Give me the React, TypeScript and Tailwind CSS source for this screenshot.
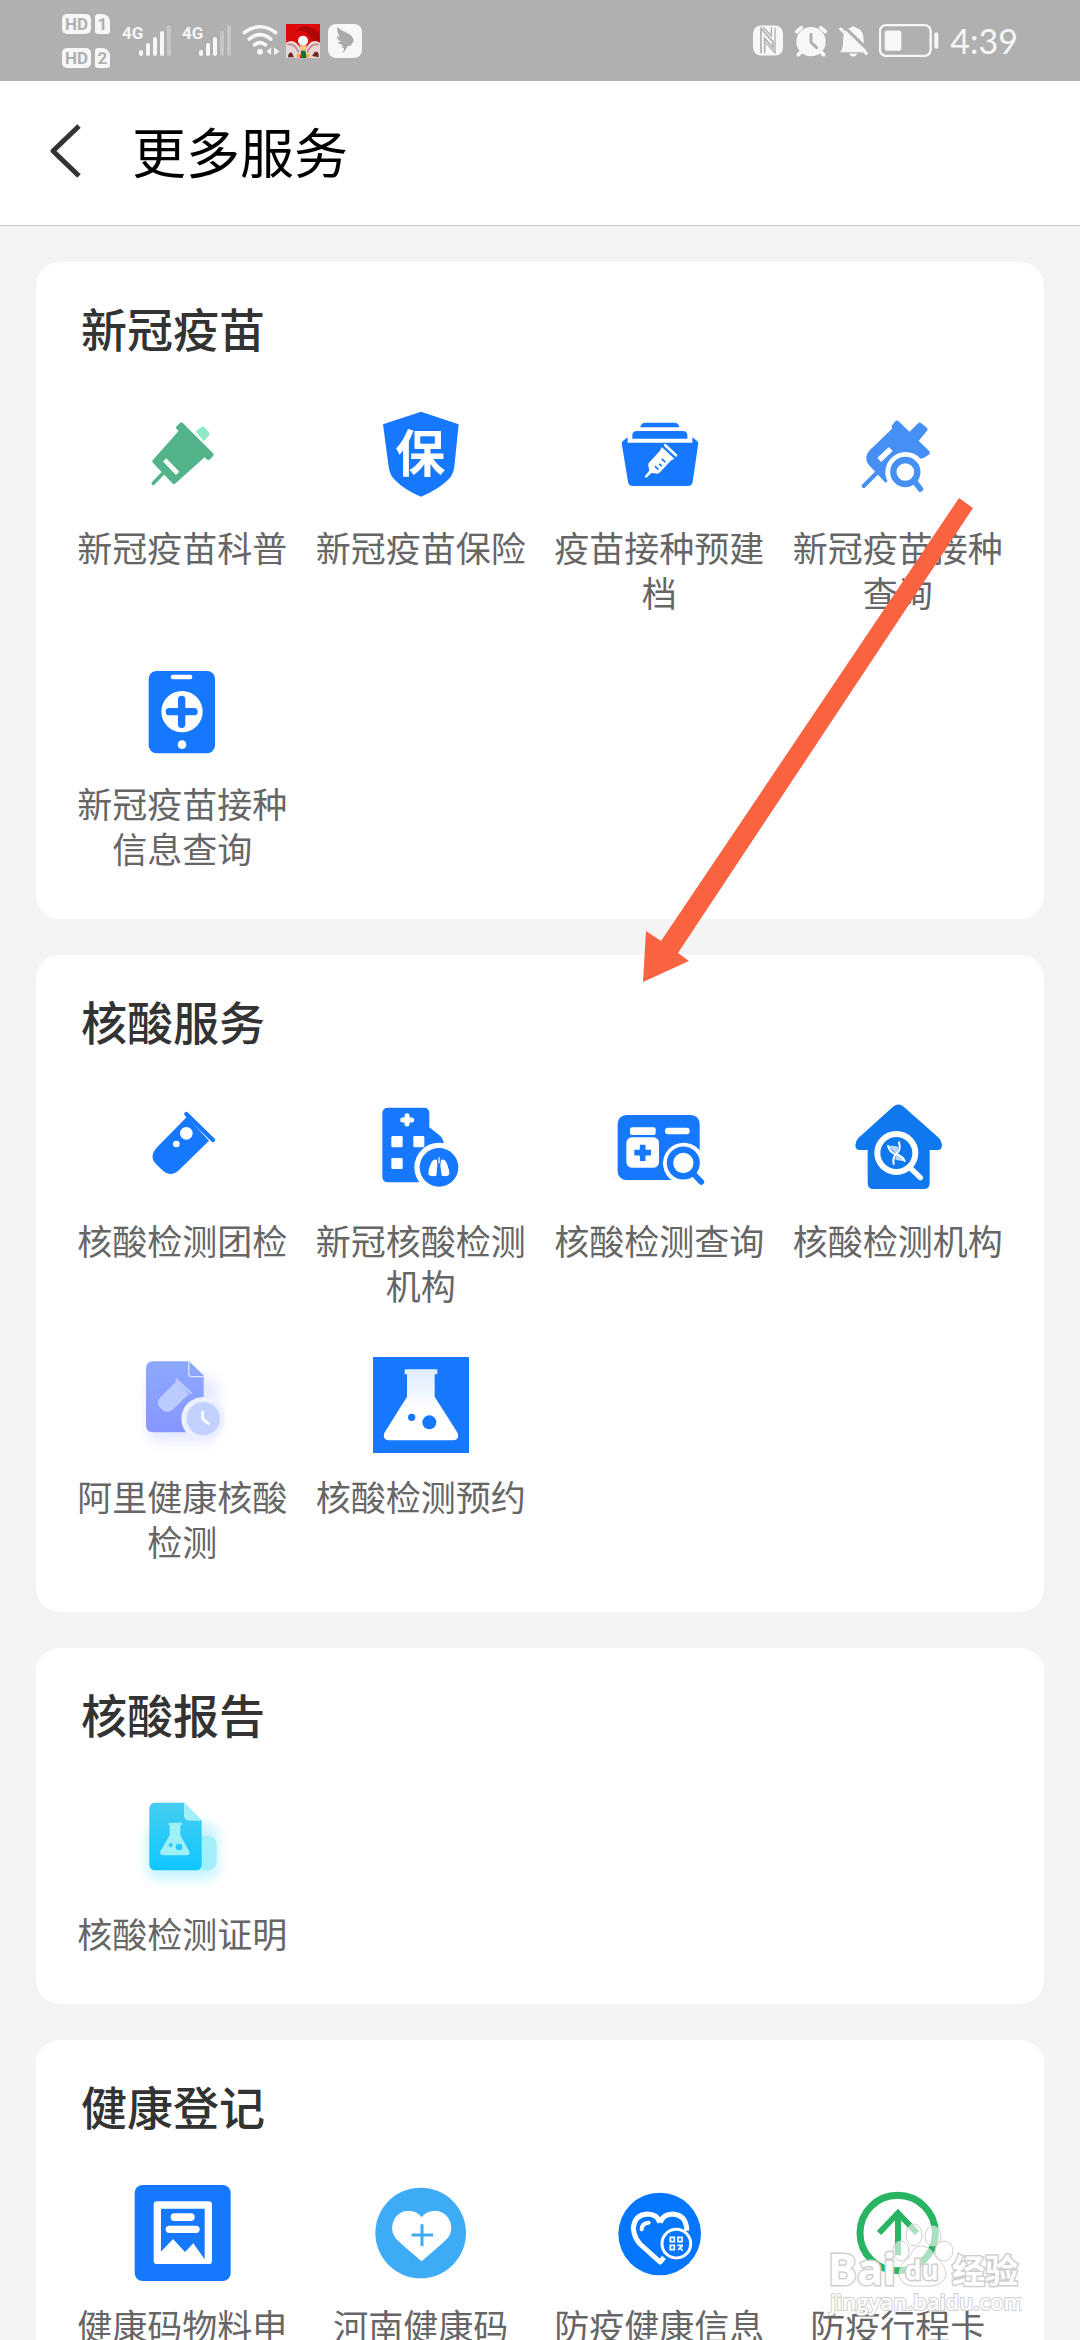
import React from 'react';

function Signal({ level }: { level: number }) {
  return (
    <svg viewBox="0 0 50 34" className="w-[50px] h-[34px]">
      <text x="0" y="15" fontSize="17" fontWeight="700" fill="#f7f7f7">4G</text>
      {[6, 13, 19, 25, 31].map((h, i) => (
        <rect key={i} x={17 + i * 7} y={32 - h} width="4" height={h} rx="2" fill="#f7f7f7" opacity={i < level ? 1 : 0.3} />
      ))}
    </svg>
  );
}

function SimBadge({ slot }: { slot: string }) {
  return (
    <div className="flex gap-1 text-[#b0b0b0] font-bold leading-[20px]">
      <span className="w-[29px] h-5 rounded-[5px] bg-[#f7f7f7] text-[17px] text-center">HD</span>
      <span className="w-[15px] h-5 rounded-[3px] rounded-tr-[8px] bg-[#f7f7f7] text-[17px] text-center">{slot}</span>
    </div>
  );
}

function StatusBar() {
  return (
    <div className="flex h-[81px] shrink-0 items-center justify-between bg-[#b0b0b0] pl-[62px] pr-[62px] font-['Roboto',sans-serif]">
      <div className="flex items-center gap-[10px]">
        <div className="flex w-[50px] flex-col gap-[14px]">
          <SimBadge slot="1" />
          <SimBadge slot="2" />
        </div>
        <Signal level={4} />
        <Signal level={3} />
        <div className="flex items-center gap-2">
          <svg viewBox="605 72 110 102" className="w-9 h-[34px] overflow-visible" fill="none" stroke="#f7f7f7" strokeWidth="11" strokeLinecap="round">
            <path d="M612 97 Q660 62 708 97M627 117 Q660 90 693 117M643 135 Q660 121 677 135" />
            <circle cx="660" cy="156" r="9" fill="#f7f7f7" stroke="none" />
            <path d="M694 142 V166 L680 156ZM703 166 V142 L720 156Z" fill="#f7f7f7" stroke="none" />
          </svg>
          <svg viewBox="738 72 102 102" className="size-[34px]">
            <rect x="738" y="72" width="102" height="102" fill="#dc0a0a" />
            <path d="M765 95 Q800 60 838 100 V130 H820 Q800 80 765 95Z" fill="#b00808" />
            <path d="M738 128 Q765 112 784 150 L780 174 H738ZM840 128 Q812 112 796 150 L800 174 H840Z" fill="#ead6d6" />
            <path d="M742 134 Q765 128 776 158M836 134 Q812 128 802 158" fill="none" stroke="#b98a90" strokeWidth="5" />
            <path d="M744 172 Q744 156 756 158 L762 172ZM836 172 Q838 152 824 156 L816 168Z" fill="#6b2a2a" />
            <circle cx="789" cy="122" r="15" fill="#fff" />
            <rect x="779" y="136" width="21" height="18" fill="#f3c28b" />
            <rect x="783" y="152" width="12" height="22" fill="#14713a" />
            <rect x="770" y="162" width="10" height="10" fill="#e2b13c" />
            <rect x="798" y="162" width="10" height="10" fill="#e2b13c" />
          </svg>
          <svg viewBox="864 72 102 102" className="size-[34px]">
            <rect x="864" y="72" width="102" height="102" rx="24" fill="#f7f7f7" />
            <path d="M892 82 Q902 92 920 98 Q940 106 941 124 L931 138 L924 137 L908 162 L913 143 H904 L909 136 Q897 134 893 126 L903 126 Q891 118 890 108 L900 112 Q890 98 892 82Z" fill="#a9a9a9" />
          </svg>
        </div>
      </div>
      <div className="flex items-center gap-[11px]">
        <svg viewBox="73 74 90 92" className="w-[30px] h-[31px]">
          <rect x="73" y="75" width="90" height="90" rx="24" fill="#f7f7f7" />
          <path d="M97 158 V84 L133 124 V142 L108 114 V158" fill="none" stroke="#b0b0b0" strokeWidth="5" />
          <path d="M103 80 L128 106 V80 M139 82 V157 L112 128" fill="none" stroke="#b0b0b0" strokeWidth="4" />
        </svg>
        <svg viewBox="195 72 102 96" className="w-[34px] h-8">
          <circle cx="246" cy="122" r="44" fill="#f7f7f7" />
          <path d="M203 92 L217 80M289 92 L275 80M208 161 L218 151M284 161 L274 151" stroke="#f7f7f7" strokeWidth="11" strokeLinecap="round" />
          <path d="M246 100 V124 L263 140" fill="none" stroke="#b0b0b0" strokeWidth="9" strokeLinecap="round" strokeLinejoin="round" />
        </svg>
        <svg viewBox="329 72 88 96" className="w-[29px] h-8">
          <path d="M331 154 Q342 146 341 122 Q340 84 364 80 Q372 70 380 80 Q404 84 404 118 Q404 146 415 154Z" fill="#f7f7f7" />
          <path d="M360 158 H384 Q380 168 372 168 Q364 168 360 158Z" fill="#f7f7f7" />
          <path d="M340 72 L420 150" stroke="#b0b0b0" strokeWidth="9" />
          <path d="M334 83 L412 158" stroke="#f7f7f7" strokeWidth="9" strokeLinecap="round" />
        </svg>
        <svg viewBox="452 72 180 98" className="w-[60px] h-[33px]">
          <rect x="455" y="75" width="152" height="92" rx="18" fill="none" stroke="#f7f7f7" strokeWidth="7" />
          <rect x="469" y="91" width="50" height="61" rx="6" fill="#f7f7f7" />
          <rect x="618" y="96" width="12" height="50" rx="6" fill="#f7f7f7" />
        </svg>
        <span className="font-['Lato',sans-serif] text-[34px] leading-none text-[#f7f7f7]">4:39</span>
      </div>
    </div>
  );
}

const BLUE = '#1677ff';

function Glyph({ box, children }: { box: string; children: React.ReactNode }) {
  return (
    <svg viewBox={box} className="size-24 overflow-visible" aria-hidden="true">
      {children}
    </svg>
  );
}

const icons = {
  syringe: (
    <Glyph box="223 54 288 288">
      <path d="M408 124 L423 113 Q429 108 435 113 L447 125 Q452 131 447 137 L432 154Z" fill="#8ceac6" />
      <g fill="#52b488" stroke="#52b488" strokeLinejoin="round" strokeLinecap="round">
        <path d="M366 122 L284 214 L343 276 L430 198Z" strokeWidth="12" />
        <path d="M365 103 L355 113 L446 204 L456 194Z" strokeWidth="12" />
        <path d="M281 280 L310 250" strokeWidth="11" />
      </g>
      <path d="M320 215 L349 245" stroke="#fff" strokeWidth="14" strokeLinecap="square" />
    </Glyph>
  ),
  shield: (
    <Glyph box="938 54 288 288">
      <path d="M1082 65 L1195 103 L1182 230 Q1179 256 1160 272 Q1130 300 1082 320 Q1034 300 1006 272 Q988 256 985 230 L968 103Z" fill={BLUE} />
      <text x="1080" y="246" fontSize="150" fontWeight="700" textAnchor="middle" fill="#fff">保</text>
    </Glyph>
  ),
  folder: (
    <Glyph box="214 54 288 288">
      <g fill={BLUE}>
        <path d="M302 112 Q303 98 318 98 H403 Q418 98 419 112Z" />
        <path d="M278 146 V136 Q278 123 292 123 H429 Q443 123 443 136 V146Z" />
        <path d="M246 160 Q246 154 264 142 V158 H458 V142 Q476 154 476 160 L459 275 Q457 288 444 288 H280 Q267 288 265 275Z" />
      </g>
      <g transform="translate(358 218) rotate(43)">
        <path d="M-26 -40 H26 L22 -28 V18 Q22 28 12 32 L5 38 L3 60 H-3 L-5 38 L-12 32 Q-22 28 -22 18 V-28Z" fill="#fff" />
        <path d="M-22 -51 H22" stroke="#fff" strokeWidth="8" strokeLinecap="round" />
        <path d="M-2 -14 H13 M3 2 H13 M-2 16 H13" stroke={BLUE} strokeWidth="5" />
      </g>
    </Glyph>
  ),
  vaccineSearch: (
    <Glyph box="929 54 288 288">
      <g fill="#468ff5" stroke="#468ff5" strokeLinejoin="round" strokeLinecap="round">
        <path d="M1060 118 L990 186 Q976 202 988 220 L1036 272 L1090 240 L1148 196Z" strokeWidth="10" />
        <path d="M1070 100 L1062 110 L1148 196 L1160 188Z" strokeWidth="16" />
        <path d="M1104 138 L1138 104 L1155 118 L1124 156Z" strokeWidth="13" />
        <path d="M970 288 L1012 246" strokeWidth="12" />
      </g>
      <path d="M1023 204 L1045 183" stroke="#fff" strokeWidth="17" strokeLinecap="square" />
      <circle cx="1096" cy="247" r="61" fill="#fff" />
      <path d="M1124 276 L1140 297" stroke="#468ff5" strokeWidth="17" strokeLinecap="round" />
      <circle cx="1095" cy="246" r="36" fill="#fff" stroke="#468ff5" strokeWidth="19" />
    </Glyph>
  ),
  phone: (
    <Glyph box="223 72 288 288">
      <rect x="267" y="93" width="199" height="247" rx="24" fill={BLUE} />
      <rect x="333" y="104" width="65" height="14" rx="7" fill="#fff" />
      <circle cx="367" cy="215" r="62" fill="#fff" />
      <path d="M366 178 V253 M329 215 H403" stroke={BLUE} strokeWidth="22" strokeLinecap="round" />
      <circle cx="367" cy="314" r="13" fill="#fff" />
    </Glyph>
  ),
  tube: (
    <Glyph box="223 63 288 288">
      <path d="M382 110 L290 204 Q267 230 288 251 L310 272 Q333 293 356 272 L448 182Z" fill={BLUE} />
      <path d="M380 102 L460 180" stroke={BLUE} strokeWidth="13" strokeLinecap="round" />
      <circle cx="380" cy="160" r="19" fill="#fff" />
      <circle cx="350" cy="192" r="10" fill="#fff" />
    </Glyph>
  ),
  hospital: (
    <Glyph box="938 63 288 288">
      <path d="M984 83 H1090 Q1107 83 1107 100 V142 L1140 168 Q1150 178 1150 192 V307 H984 Q966 307 966 290 V100 Q966 83 984 83Z" fill={BLUE} />
      <path d="M1040 107 V132 M1027 120 H1054" stroke="#fff" strokeWidth="15" strokeLinecap="round" />
      <g fill="#fff">
        <rect x="993" y="168" width="34" height="34" rx="4" />
        <rect x="1059" y="168" width="33" height="34" rx="4" />
        <rect x="993" y="234" width="34" height="33" rx="4" />
        <circle cx="1136" cy="262" r="74" />
      </g>
      <circle cx="1136" cy="262" r="58" fill={BLUE} />
      <path d="M1130 240 Q1118 234 1110 254 Q1104 268 1104 284 Q1112 291 1128 287 L1131 256ZM1142 240 Q1154 234 1161 254 Q1167 268 1167 284 Q1160 291 1144 287 L1140 256Z" fill="#fff" />
      <path d="M1136 232 V250" stroke="#fff" strokeWidth="4" />
    </Glyph>
  ),
  report: (
    <Glyph box="214 63 288 288">
      <rect x="234" y="105" width="246" height="195" rx="26" fill={BLUE} />
      <g fill="#fff">
        <rect x="271" y="142" width="77" height="23" rx="6" />
        <rect x="260" y="172" width="98" height="91" rx="16" />
        <rect x="376" y="143" width="74" height="20" rx="9" />
        <circle cx="432" cy="250" r="62" />
      </g>
      <path d="M309 194 V243 M284 218 H334" stroke={BLUE} strokeWidth="17" />
      <circle cx="431" cy="249" r="40" fill="none" stroke={BLUE} strokeWidth="19" />
      <path d="M462 282 L485 306" stroke={BLUE} strokeWidth="17" strokeLinecap="round" />
    </Glyph>
  ),
  house: (
    <Glyph box="929 63 288 288">
      <path d="M1058 80 Q1074 67 1090 80 L1196 174 Q1205 184 1205 196 Q1205 210 1192 210 H1168 V308 Q1168 327 1150 327 H1000 Q982 327 982 308 V210 H958 Q945 210 945 196 Q945 184 954 174Z" fill="#0f78ee" />
      <circle cx="1068" cy="219" r="57" fill="none" stroke="#fff" strokeWidth="18" />
      <path d="M1110 264 L1140 293" stroke="#fff" strokeWidth="16" strokeLinecap="round" />
      <path d="M1043 198 Q1060 196 1074 200 L1070 222 Q1060 216 1043 198ZM1070 222 Q1086 228 1092 243 Q1074 244 1064 238Z" fill="#fff" fillOpacity="0.7" />
      <g fill="none" stroke="#fff" strokeWidth="6" strokeLinecap="round">
        <path d="M1043 198 Q1048 216 1064 222 Q1088 228 1093 243" />
        <path d="M1076 187 Q1083 210 1068 222 Q1056 232 1060 252" />
      </g>
    </Glyph>
  ),
  aliDoc: (
    <Glyph box="223 81 288 288">
      <defs>
        <linearGradient id="aliFill" x1="0" y1="0" x2="0" y2="1">
          <stop offset="0" stopColor="#8da9ff" />
          <stop offset="1" stopColor="#8896ff" />
        </linearGradient>
        <filter id="glow" x="-50%" y="-50%" width="200%" height="200%">
          <feGaussianBlur stdDeviation="18" />
        </filter>
      </defs>
      <rect x="262" y="140" width="214" height="196" rx="40" fill="#8896ff" opacity="0.2" filter="url(#glow)" />
      <path d="M281 94 H388 L432 136 V307 H281 Q259 307 259 286 V115 Q259 94 281 94Z" fill="url(#aliFill)" />
      <path d="M387 95 V128 Q387 140 399 140 H431" fill="none" stroke="#dce5ff" strokeWidth="4" />
      <path d="M352 152 L302 202 Q288 217 300 232 L308 240 Q322 252 338 240 L388 192Z" fill="#bccbff" />
      <path d="M350 149 L394 189" stroke="#bccbff" strokeWidth="7" strokeLinecap="round" />
      <circle cx="430" cy="266" r="65" fill="#edf1ff" />
      <circle cx="431" cy="266" r="50" fill="#c2d1ff" />
      <path d="M429 246 V266 L446 281" fill="none" stroke="#fff" strokeWidth="8" strokeLinecap="round" strokeLinejoin="round" />
    </Glyph>
  ),
  flask: (
    <Glyph box="936 81 288 288">
      <defs>
        <linearGradient id="flaskFill" x1="0" y1="0" x2="0" y2="1">
          <stop offset="0" stopColor="#dfecff" />
          <stop offset="0.6" stopColor="#fff" />
        </linearGradient>
      </defs>
      <rect x="936" y="81" width="288" height="288" fill={BLUE} />
      <path d="M1034 118 H1126 Q1129 118 1129 121 V133 H1121 V200 L1190 309 Q1197 331 1176 331 H984 Q963 331 970 309 L1038 200 V133 H1031 V121 Q1031 118 1034 118Z" fill="url(#flaskFill)" />
      <circle cx="1052" cy="262" r="11" fill={BLUE} />
      <circle cx="1105" cy="277" r="21" fill={BLUE} />
    </Glyph>
  ),
  certificate: (
    <Glyph box="223 72 288 288">
      <defs>
        <linearGradient id="certFill" x1="0" y1="0" x2="0" y2="1">
          <stop offset="0" stopColor="#45cdf0" />
          <stop offset="1" stopColor="#0fc6ff" />
        </linearGradient>
      </defs>
      <rect x="262" y="160" width="214" height="170" rx="36" fill="#3fd6ff" opacity="0.28" filter="url(#glow)" />
      <rect x="380" y="198" width="91" height="103" rx="26" fill="#9ff0f8" />
      <path d="M288 98 H373 L426 152 V282 Q426 301 408 301 H288 Q269 301 269 282 V117 Q269 98 288 98Z" fill="url(#certFill)" />
      <path d="M373 98 L426 152 H390 Q373 152 373 136Z" fill="#9ff0f8" />
      <path d="M327 158 H366 V165 H362 V196 L389 244 Q392 256 381 256 H311 Q299 256 302 244 L330 196 V165 H327Z" fill="#a0f0f8" />
      <circle cx="333" cy="225" r="6" fill="#28c9f8" />
      <circle cx="358" cy="231" r="10" fill="#28c9f8" />
    </Glyph>
  ),
  material: (
    <Glyph box="223 108 288 288">
      <rect x="225" y="105" width="288" height="288" rx="24" fill={BLUE} />
      <rect x="282" y="154" width="175" height="188" rx="10" fill="#fff" />
      <path d="M304 176 H435 V328 L401 280 L376 306 L340 267 L304 305Z" fill={BLUE} />
      <rect x="333" y="190" width="72" height="23" rx="11" fill="#fff" />
      <rect x="318" y="227" width="102" height="22" rx="11" fill="#fff" />
    </Glyph>
  ),
  heartPlus: (
    <Glyph box="938 108 288 288">
      <circle cx="1081" cy="249" r="136" fill="#3eabf6" />
      <path d="M1084 201 Q1068 182 1044 182 Q1018 183 1004 204 Q986 234 1004 262 Q1012 274 1084 334 Q1154 274 1164 262 Q1182 234 1164 204 Q1150 183 1124 182 Q1100 182 1084 201Z" fill="#fff" />
      <path d="M1085 223 V288 M1054 255 H1118" stroke="#3eabf6" strokeWidth="9" />
    </Glyph>
  ),
  heartCode: (
    <Glyph box="213 108 288 288">
      <circle cx="359" cy="252" r="124" fill="#0576ff" />
      <path d="M360 218 Q352 192 322 192 Q284 194 280 234 Q282 262 300 282 L360 336 L372 322 M360 218 Q370 192 398 192 Q434 194 440 232 V242" fill="none" stroke="#fff" strokeWidth="15" strokeLinejoin="round" />
      <path d="M305 238 Q306 219 326 218" fill="none" stroke="#fff" strokeWidth="12" strokeLinecap="round" />
      <circle cx="409" cy="281" r="43" fill="#0576ff" stroke="#fff" strokeWidth="9" />
      <g fill="none" stroke="#fff" strokeWidth="5">
        <path d="M391 262 H403 V275 H391ZM414 262 H426 V275 H414ZM391 286 H403 V299 H391ZM412 286 H429M428 286 L414 300M418 292 L428 302" />
      </g>
    </Glyph>
  ),
  arrowUp: (
    <Glyph box="928 108 288 288">
      <circle cx="1071" cy="249" r="113" fill="none" stroke="#28b462" strokeWidth="21" />
      <path d="M1072 316 V190 M1015 249 L1072 189 L1129 249" fill="none" stroke="#28b462" strokeWidth="18" />
    </Glyph>
  ),
};

const sections: { title: string; items: { icon: keyof typeof icons; label: string }[] }[] = [
  {
    title: '新冠疫苗',
    items: [
      { icon: 'syringe', label: '新冠疫苗科普' },
      { icon: 'shield', label: '新冠疫苗保险' },
      { icon: 'folder', label: '疫苗接种预建档' },
      { icon: 'vaccineSearch', label: '新冠疫苗接种查询' },
      { icon: 'phone', label: '新冠疫苗接种信息查询' },
    ],
  },
  {
    title: '核酸服务',
    items: [
      { icon: 'tube', label: '核酸检测团检' },
      { icon: 'hospital', label: '新冠核酸检测机构' },
      { icon: 'report', label: '核酸检测查询' },
      { icon: 'house', label: '核酸检测机构' },
      { icon: 'aliDoc', label: '阿里健康核酸检测' },
      { icon: 'flask', label: '核酸检测预约' },
    ],
  },
  {
    title: '核酸报告',
    items: [{ icon: 'certificate', label: '核酸检测证明' }],
  },
  {
    title: '健康登记',
    items: [
      { icon: 'material', label: '健康码物料申' },
      { icon: 'heartPlus', label: '河南健康码' },
      { icon: 'heartCode', label: '防疫健康信息' },
      { icon: 'arrowUp', label: '防疫行程卡' },
    ],
  },
];

function Watermark() {
  return (
    <svg viewBox="826 2220 196 98" className="pointer-events-none absolute bottom-[22px] right-[58px] h-[98px] w-[196px]" aria-hidden="true">
      <g fill="#fff" fillOpacity="0.6" stroke="#cfcfcf" strokeWidth="1">
        <ellipse cx="901" cy="2251" rx="8" ry="10" />
        <ellipse cx="914" cy="2235" rx="8" ry="11" />
        <ellipse cx="933" cy="2236" rx="8" ry="10" />
        <ellipse cx="944" cy="2251" rx="9" ry="10" />
        <path d="M921 2246 Q930 2246 934 2255 Q948 2268 946 2276 Q942 2288 922 2286 Q902 2288 899 2276 Q898 2266 910 2256 Q914 2246 921 2246Z" />
        <g fontWeight="700" paintOrder="stroke" strokeWidth="3" fillOpacity="1">
          <text x="828" y="2285" fontSize="43" fontFamily="'Open Sans', sans-serif">Bai</text>
          <text x="905" y="2280" fontSize="26" fontFamily="'Open Sans', sans-serif">du</text>
          <text x="952" y="2283" fontSize="33">经验</text>
        </g>
        <text x="830" y="2310" fontSize="22" fontFamily="'Open Sans', sans-serif" fontWeight="600" paintOrder="stroke" strokeWidth="2" fillOpacity="1">jingyan.baidu.com</text>
      </g>
    </svg>
  );
}

export default function App() {
  return (
    <div className="relative flex h-screen flex-col overflow-hidden bg-[#f4f4f4] font-['Noto_Sans_CJK_SC',sans-serif]">
      <StatusBar />
      <header className="flex h-[145px] shrink-0 items-center border-b border-[#c8c8c8] bg-white pb-1 pl-12">
        <button type="button" aria-label="返回" className="w-[84px]">
          <svg viewBox="0 0 34 54" className="h-[54px] w-[34px]" fill="none" stroke="#333" strokeWidth="5">
            <path d="M31 2 L5 27 L31 52" strokeLinejoin="round" />
          </svg>
        </button>
        <h1 className="text-[54px] leading-[72px] text-black">更多服务</h1>
      </header>

      <main className="flex min-h-0 flex-1 flex-col gap-9 overflow-hidden px-9 pt-9">
        {sections.map((section) => (
          <section key={section.title} className="shrink-0 rounded-3xl bg-white px-[27px] pb-[49px] pt-[33px]">
            <h2 className="mb-[49px] pl-[18px] text-[46px] font-medium leading-[64px] text-[#333]">{section.title}</h2>
            <div className="grid grid-cols-4 gap-y-[50px]">
              {section.items.map((item) => (
                <a key={item.label} href="#" className="flex flex-col items-center gap-5">
                  {icons[item.icon]}
                  <span className="text-center text-[35px] leading-[45px] text-[#666]">{item.label}</span>
                </a>
              ))}
            </div>
          </section>
        ))}
      </main>

      {/* pointer from the vaccine block down to the test block */}
      <svg viewBox="640 496 336 488" className="pointer-events-none absolute left-[640px] top-[496px] h-[488px] w-[336px]" aria-hidden="true">
        <path d="M959 498 L973 508 L678 953 L689 961 L643 982 L646 931 L661 941Z" fill="#fa6340" />
      </svg>
      <Watermark />
    </div>
  );
}
